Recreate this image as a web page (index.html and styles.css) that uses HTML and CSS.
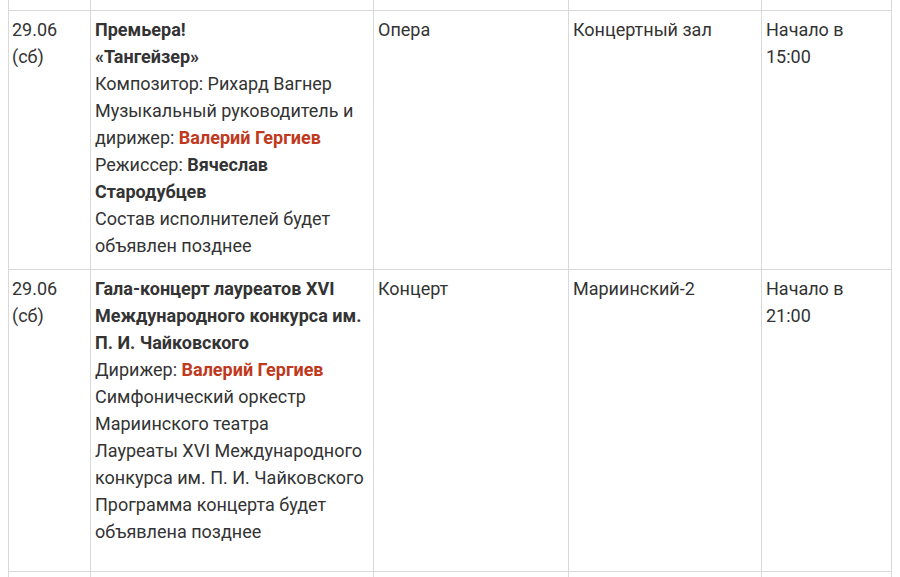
FILE: index.html
```html
<!DOCTYPE html>
<html lang="ru">
<head>
<meta charset="utf-8">
<title>Афиша</title>
<link rel="stylesheet" href="styles.css">
</head>
<body>
<table class="schedule">
  <colgroup>
    <col class="c-date">
    <col class="c-title">
    <col class="c-genre">
    <col class="c-place">
    <col class="c-time">
  </colgroup>
  <tbody>
    <tr class="prev-row">
      <td></td><td></td><td></td><td></td><td></td>
    </tr>
    <tr>
      <td class="date">29.06 (сб)</td>
      <td>
        <b>Премьера!<br>«Тангейзер»</b><br>
        Композитор: Рихард Вагнер<br>
        Музыкальный руководитель и дирижер: <b class="accent">Валерий Гергиев</b><br>
        Режиссер: <b>Вячеслав Стародубцев</b><br>
        Состав исполнителей будет объявлен позднее
      </td>
      <td>Опера</td>
      <td>Концертный зал</td>
      <td>Начало в 15:00</td>
    </tr>
    <tr class="tall-row">
      <td class="date">29.06 (сб)</td>
      <td>
        <b>Гала-концерт лауреатов XVI Международного конкурса им. П. И. Чайковского</b><br>
        Дирижер: <b class="accent">Валерий Гергиев</b><br>
        Симфонический оркестр Мариинского театра<br>
        Лауреаты XVI Международного конкурса им. П. И. Чайковского<br>
        Программа концерта будет объявлена позднее
      </td>
      <td>Концерт</td>
      <td>Мариинский-2</td>
      <td>Начало в 21:00</td>
    </tr>
    <tr class="next-row">
      <td></td><td></td><td></td><td></td><td></td>
    </tr>
  </tbody>
</table>
</body>
</html>
```

FILE: styles.css
```css
html, body {
  margin: 0;
  padding: 0;
  background: #ffffff;
}

body {
  padding: 0 0 0 8px;
  font-family: Roboto, "Liberation Sans", Arial, sans-serif;
  font-size: 18px;
  line-height: 27px;
  color: #333333;
}

.schedule {
  border-collapse: collapse;
  table-layout: fixed;
  width: 883px;
}

.c-date { width: 82px; }
.c-title { width: 283px; }
.c-genre { width: 195px; }
.c-place { width: 193px; }
.c-time { width: 130px; }

.schedule td {
  border: 1px solid #d9d9d9;
  padding: 5px 4px 10px 4px;
  vertical-align: top;
  text-align: left;
}

.schedule td.date {
  padding-left: 3px;
}

.schedule td b {
  font-weight: 700;
  color: #333333;
}

.schedule td b.accent {
  color: #c0391c;
}

.prev-row td {
  height: 10px;
  padding: 0;
  border-top: none;
}

.tall-row td {
  padding-bottom: 26px;
}

.next-row td {
  height: 20px;
  padding: 0;
}
```
